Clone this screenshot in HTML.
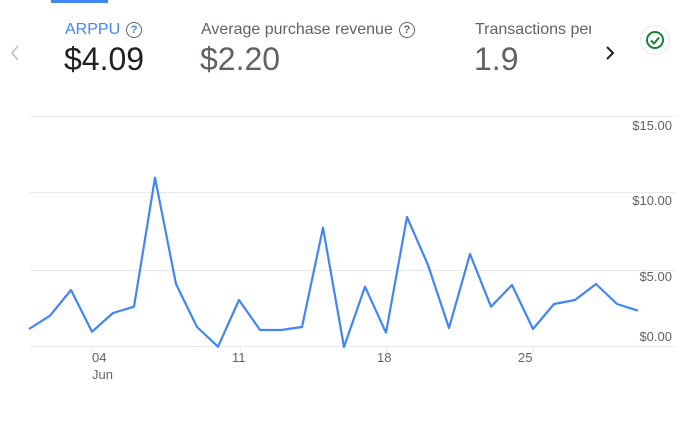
<!DOCTYPE html><html><head><style>
body{margin:0;width:691px;height:437px;background:#fff;font-family:"Liberation Sans",Arial,sans-serif;position:relative;overflow:hidden}
.a{position:absolute;white-space:nowrap}
.t{font-size:16px;color:#5f6368;top:21px}
.v{font-size:32px;color:#5f6368;top:41px}
.q{display:inline-block;width:14px;height:14px;border:1.6px solid #5f6368;border-radius:50%;font-size:11px;line-height:14px;text-align:center;font-weight:bold;vertical-align:1px;margin-left:6px}
.y{font-size:13px;color:#5f6368;right:19px}
.x{font-size:13px;color:#5f6368;top:350px}
</style></head><body>
<div class="a" style="left:51px;top:0;width:57px;height:3px;background:#4285f4"></div>
<svg class="a" style="left:8px;top:44px" width="14" height="18"><path d="M10 2l-6 7 6 7" fill="none" stroke="#bdc1c6" stroke-width="1.6"/></svg>
<div class="a t" style="left:65px;color:#4285f4">ARPPU<span class="q">?</span></div>
<div class="a v" style="left:64px;color:#202124">$4.09</div>
<div class="a t" style="left:201px">Average purchase revenue<span class="q">?</span></div>
<div class="a v" style="left:200px">$2.20</div>
<div class="a t" style="left:475px;width:116px;overflow:hidden">Transactions per</div>
<div class="a v" style="left:474px">1.9</div>
<svg class="a" style="left:603px;top:45px" width="14" height="16"><path d="M4 2l6 6-6 6" fill="none" stroke="#202124" stroke-width="2"/></svg>
<div class="a" style="left:640px;top:25px;width:28px;height:28px;border:1px solid #e8eaed;border-radius:50%"></div>
<svg class="a" style="left:645px;top:30px" width="20" height="20"><circle cx="10" cy="10" r="8" fill="none" stroke="#188038" stroke-width="2"/><path d="M6 10.5l3 3 5-6" fill="none" stroke="#188038" stroke-width="2"/></svg>
<svg class="a" style="left:0;top:0" width="691" height="437">
<g stroke="#e8eaed" stroke-width="1"><line x1="29" x2="676" y1="116.5" y2="116.5"/><line x1="29" x2="676" y1="192.5" y2="192.5"/><line x1="29" x2="676" y1="270.5" y2="270.5"/><line x1="29" x2="676" y1="346.5" y2="346.5"/>
<line x1="92.5" x2="92.5" y1="346" y2="352"/><line x1="240.5" x2="240.5" y1="346" y2="352"/><line x1="386.5" x2="386.5" y1="346" y2="352"/><line x1="533.5" x2="533.5" y1="346" y2="352"/></g>
<polyline fill="none" stroke="#4285f4" stroke-width="2.2" stroke-linejoin="round" points="29,329 50,315.7 71,290 92,331.7 113,313 134,306.7 155,177.7 176,284 197,327 218,346.7 239,300 260,330 281,330 302,327 323,227.7 344,347 365,286.7 386,332.7 407,217 428,265 449,328 470,254 491,306.7 512,285 533,329 554,304 575,300 596,284 617,304 638,310.7"/>
</svg>
<div class="a y" style="top:118px">$15.00</div>
<div class="a y" style="top:193px">$10.00</div>
<div class="a y" style="top:269px">$5.00</div>
<div class="a y" style="top:329px">$0.00</div>
<div class="a x" style="left:92px">04</div>
<div class="a x" style="left:92px;top:367px">Jun</div>
<div class="a x" style="left:232px">11</div>
<div class="a x" style="left:377px">18</div>
<div class="a x" style="left:518px">25</div>
</body></html>
